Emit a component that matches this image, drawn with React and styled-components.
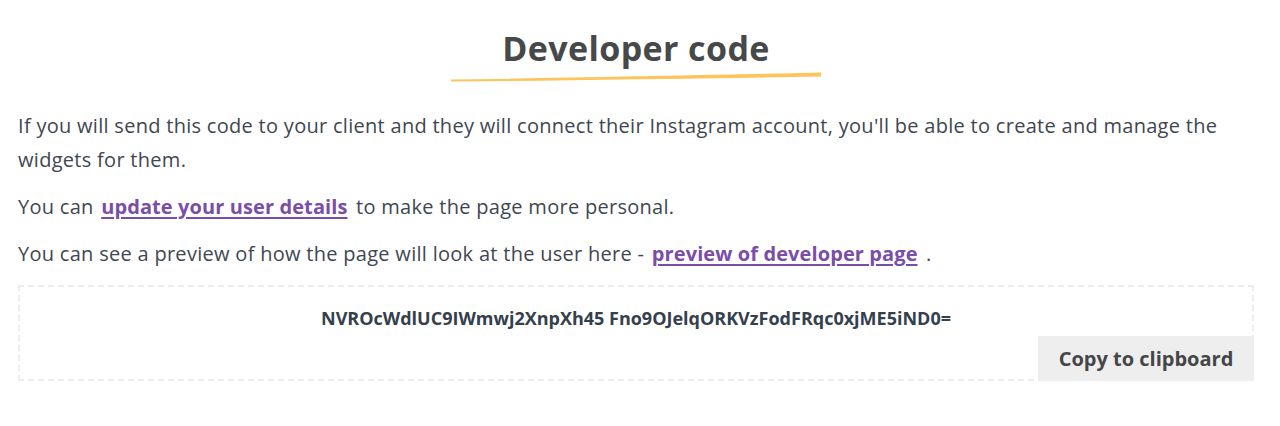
import React from "react";
import styled, { createGlobalStyle } from "styled-components";

const GlobalStyle = createGlobalStyle`
  html, body { margin: 0; padding: 0; background: #ffffff; }
  body { font-family: "Open Sans", "Liberation Sans", sans-serif; }
`;

const Page = styled.main`
  padding: 28px 26px 40px 18px;
  color: #3e4751;
`;

const Header = styled.header`
  display: flex;
  flex-direction: column;
  align-items: center;
  margin-bottom: 26px;
`;

const Title = styled.h1`
  margin: 0;
  font-size: 34px;
  line-height: 40px;
  font-weight: 700;
  letter-spacing: 0.4px;
  color: #464849;
`;

const Underline = styled.svg`
  display: block;
  width: 372px;
  height: 12px;
  margin-top: 3px;
`;

const Paragraph = styled.p`
  margin: 0 0 13px;
  font-size: 20px;
  line-height: 34px;
  letter-spacing: 0.29px;
  color: #3e4751;
`;

const TextLink = styled.a`
  margin: 0 3px 0 2px;
  color: #7a4ea8;
  font-weight: 700;
  letter-spacing: 0.1px;
  text-decoration: underline;
  text-underline-offset: 3px;
  text-decoration-thickness: 2px;
`;

const CodeBox = styled.section`
  display: flex;
  flex-direction: column;
  margin-top: 14px;
  padding-top: 19px;
  border: 2px dashed #ededed;
`;

const Code = styled.div`
  text-align: center;
  font-size: 18px;
  line-height: 24px;
  font-weight: 700;
  color: #34404c;
`;

const CopyButton = styled.button`
  align-self: flex-end;
  margin: 6px -2px -2px 0;
  height: 45px;
  width: 216px;
  padding: 0;
  border: none;
  background: #eeeeee;
  font-family: "Open Sans", "Liberation Sans", sans-serif;
  font-size: 20px;
  font-weight: 700;
  color: #444648;
  cursor: pointer;
`;

export default function App() {
  return (
    <>
      <GlobalStyle />
      <Page>
        <Header>
          <Title>Developer code</Title>
          <Underline viewBox="0 0 372 12" aria-hidden="true">
            <path
              d="M1 8.6 C 120 6.8, 250 4.2, 371 1.6 L 371 5.6 C 250 7.4, 120 9.4, 1 10.6 Z"
              fill="#ffc35b"
            />
          </Underline>
        </Header>
        <Paragraph>
          If you will send this code to your client and they will connect their
          Instagram account, you'll be able to create and manage the widgets for
          them.
        </Paragraph>
        <Paragraph>
          You can <TextLink href="#">update your user details</TextLink> to make
          the page more personal.
        </Paragraph>
        <Paragraph>
          You can see a preview of how the page will look at the user here -{" "}
          <TextLink href="#">preview of developer page</TextLink> .
        </Paragraph>
        <CodeBox>
          <Code>NVROcWdlUC9IWmwj2XnpXh45 Fno9OJelqORKVzFodFRqc0xjME5iND0=</Code>
          <CopyButton type="button">Copy to clipboard</CopyButton>
        </CodeBox>
      </Page>
    </>
  );
}
